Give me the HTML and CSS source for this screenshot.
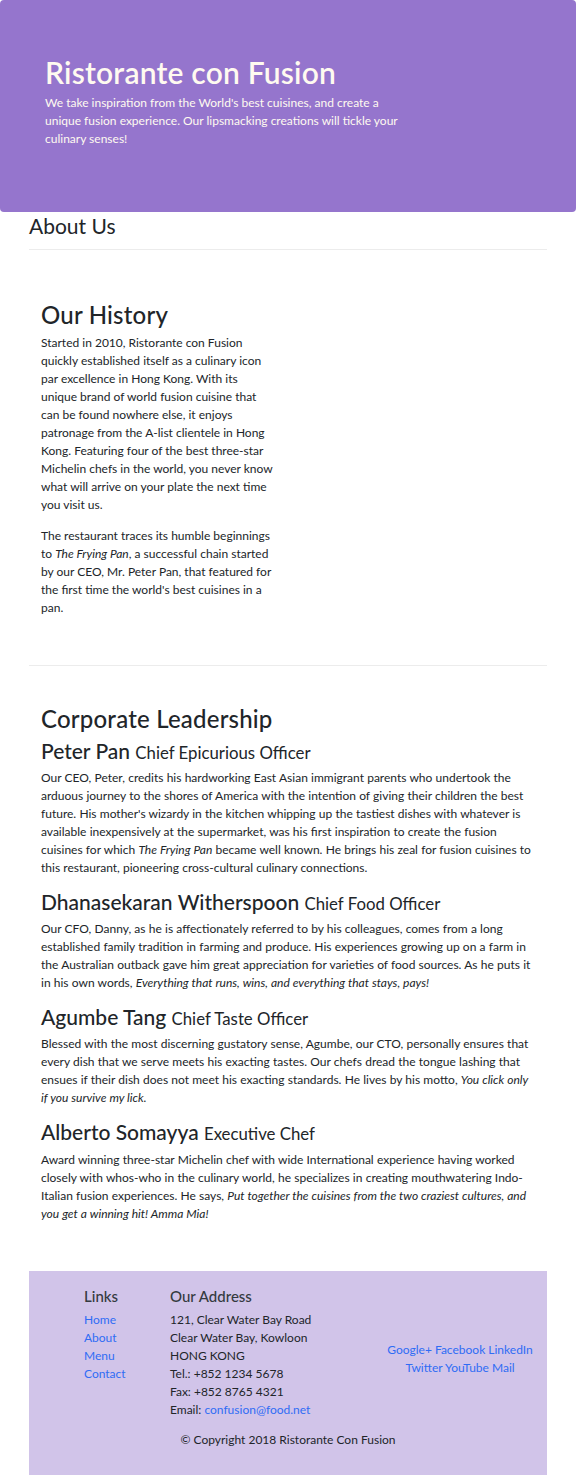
FILE: index.html
```html
<!DOCTYPE html>
<html lang="en">
<head>
<meta charset="utf-8">
<title>Ristorante con Fusion - About Us</title>
<link rel="stylesheet" href="styles.css">
</head>
<body>
<header class="jumbotron">
  <div class="jumbo-inner">
    <h1 class="jumbo-title">Ristorante con Fusion</h1>
    <p class="jumbo-text">We take inspiration from the World's best cuisines, and create a unique fusion experience. Our lipsmacking creations will tickle your culinary senses!</p>
  </div>
</header>

<main class="container">
  <section class="page-head">
    <h3 class="page-title">About Us</h3>
    <hr class="rule">
  </section>

  <section class="history">
    <div class="history-col">
      <h2 class="section-title">Our History</h2>
      <p class="para">Started in 2010, Ristorante con Fusion quickly established itself as a culinary icon par excellence in Hong Kong. With its unique brand of world fusion cuisine that can be found nowhere else, it enjoys patronage from the A-list clientele in Hong Kong. Featuring four of the best three-star Michelin chefs in the world, you never know what will arrive on your plate the next time you visit us.</p>
      <p class="para">The restaurant traces its humble beginnings to <em>The Frying Pan</em>, a successful chain started by our CEO, Mr. Peter Pan, that featured for the first time the world's best cuisines in a pan.</p>
    </div>
  </section>

  <hr class="rule">

  <section class="leadership">
    <h2 class="section-title">Corporate Leadership</h2>
    <h3 class="person">Peter Pan <small class="role">Chief Epicurious Officer</small></h3>
    <p class="para">Our CEO, Peter, credits his hardworking East Asian immigrant parents who undertook the arduous journey to the shores of America with the intention of giving their children the best future. His mother's wizardy in the kitchen whipping up the tastiest dishes with whatever is available inexpensively at the supermarket, was his first inspiration to create the fusion cuisines for which <em>The Frying Pan</em> became well known. He brings his zeal for fusion cuisines to this restaurant, pioneering cross-cultural culinary connections.</p>
    <h3 class="person">Dhanasekaran Witherspoon <small class="role">Chief Food Officer</small></h3>
    <p class="para">Our CFO, Danny, as he is affectionately referred to by his colleagues, comes from a long established family tradition in farming and produce. His experiences growing up on a farm in the Australian outback gave him great appreciation for varieties of food sources. As he puts it in his own words, <em>Everything that runs, wins, and everything that stays, pays!</em></p>
    <h3 class="person">Agumbe Tang <small class="role">Chief Taste Officer</small></h3>
    <p class="para">Blessed with the most discerning gustatory sense, Agumbe, our CTO, personally ensures that every dish that we serve meets his exacting tastes. Our chefs dread the tongue lashing that ensues if their dish does not meet his exacting standards. He lives by his motto, <em>You click only if you survive my lick.</em></p>
    <h3 class="person">Alberto Somayya <small class="role">Executive Chef</small></h3>
    <p class="para">Award winning three-star Michelin chef with wide International experience having worked closely with whos-who in the culinary world, he specializes in creating mouthwatering Indo-Italian fusion experiences. He says, <em>Put together the cuisines from the two craziest cultures, and you get a winning hit! Amma Mia!</em></p>
  </section>

  <footer class="footer">
    <div class="footer-grid">
      <div class="footer-links">
        <h5 class="footer-title">Links</h5>
        <ul class="link-list">
          <li><a href="#">Home</a></li>
          <li><a href="#">About</a></li>
          <li><a href="#">Menu</a></li>
          <li><a href="#">Contact</a></li>
        </ul>
      </div>
      <div class="footer-address">
        <h5 class="footer-title">Our Address</h5>
        <address class="address">
          121, Clear Water Bay Road<br>
          Clear Water Bay, Kowloon<br>
          HONG KONG<br>
          Tel.: +852 1234 5678<br>
          Fax: +852 8765 4321<br>
          Email: <a href="#">confusion@food.net</a>
        </address>
      </div>
      <div class="footer-social">
        <a href="#">Google+</a> <a href="#">Facebook</a> <a href="#">LinkedIn</a> <a href="#">Twitter</a> <a href="#">YouTube</a> <a href="#">Mail</a>
      </div>
    </div>
    <p class="copyright">© Copyright 2018 Ristorante Con Fusion</p>
  </footer>
</main>
</body>
</html>
```

FILE: styles.css
```css
html, body {
  margin: 0;
  padding: 0;
}

body {
  font-family: Lato, "Liberation Sans", sans-serif;
  font-size: 12px;
  line-height: 1.5;
  color: #212529;
  background: #fff;
}

h1, h2, h3, h5 {
  margin: 0;
  font-weight: 500;
  line-height: 1.2;
}

a {
  color: #2f6cf5;
  text-decoration: none;
}

.jumbotron {
  background: #9575cd;
  color: #fffaf0;
  border-radius: 4px;
  padding: 54px 45px 64px;
}

.jumbo-title {
  font-size: 30px;
  font-weight: 600;
  letter-spacing: 0.2px;
  margin-bottom: 4px;
}

.jumbo-text {
  margin: 0;
  max-width: 372px;
}

.container {
  width: 518px;
  margin: 0 auto;
}

.page-title {
  font-size: 21px;
  font-weight: 400;
  margin: 1px 0 11px;
}

.rule {
  border: 0;
  border-top: 1px solid #ececec;
  margin: 0;
}

.history {
  padding: 51px 12px 35px;
}

.history-col {
  width: 234px;
}

.section-title {
  font-size: 24px;
  letter-spacing: 0.2px;
  margin-bottom: 4px;
}

.para {
  margin: 0 0 13px;
}

.leadership {
  padding: 39px 12px 36px;
}

.leadership .para {
  margin-bottom: 12px;
  word-spacing: 0.15px;
}

.person {
  font-size: 21px;
  margin-bottom: 6px;
}

.role {
  font-size: 80%;
  font-weight: 400;
}

.footer {
  background: #d1c4e9;
  padding: 16px 0 26px;
}

.footer-grid {
  display: grid;
  grid-template-columns: 86px 211px 158px;
  padding-left: 55px;
  align-items: center;
}

.footer-links,
.footer-address {
  align-self: start;
}

.footer-title {
  font-size: 15px;
  color: #343a40;
  margin-bottom: 6px;
}

.link-list {
  list-style: none;
  margin: 0;
  padding: 0;
}

.address {
  font-style: normal;
  margin: 0 0 12px;
}

.footer-social {
  text-align: center;
}

.copyright {
  text-align: center;
  margin: 0;
}
```
